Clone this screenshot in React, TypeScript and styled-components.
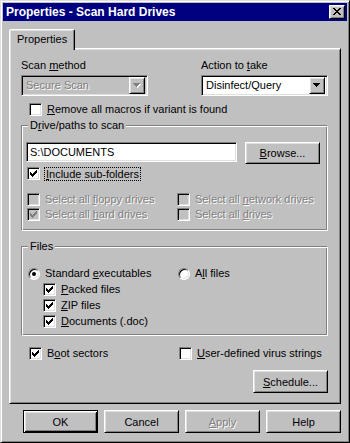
import React from 'react';
import styled, { createGlobalStyle, css } from 'styled-components';

const GlobalStyle = createGlobalStyle`
  html, body {
    margin: 0;
    padding: 0;
    background: #c0c0c0;
  }
  body {
    font-family: 'Liberation Sans', Arial, sans-serif;
    font-size: 11px;
    color: #000;
  }
  * {
    box-sizing: border-box;
  }
  u {
    text-decoration-thickness: 1px;
    text-underline-offset: 1px;
  }
`;

const raised = css`
  border: 1px solid;
  border-color: #fff #000 #000 #fff;
  box-shadow: inset 1px 1px #dfdfdf, inset -1px -1px #808080;
`;

const sunken = css`
  border: 1px solid;
  border-color: #808080 #fff #fff #808080;
  box-shadow: inset 1px 1px #000, inset -1px -1px #dfdfdf;
`;

const disabledText = css`
  color: #808080;
  text-shadow: 1px 1px 0 #fff;
`;

const Window = styled.div`
  width: 350px;
  height: 443px;
  background: #c0c0c0;
  border: 1px solid;
  border-color: #dfdfdf #000 #000 #dfdfdf;
  box-shadow: inset 1px 1px #fff, inset -1px -1px #808080;
  padding: 2px;
  display: flex;
  flex-direction: column;
`;

const TitleBar = styled.div`
  height: 18px;
  background: #000080;
  color: #fff;
  display: flex;
  align-items: center;
  justify-content: space-between;
  padding: 0 2px 0 3px;
`;

const Title = styled.span`
  font-weight: bold;
  font-size: 12px;
`;

const CloseButton = styled.div`
  ${raised};
  width: 16px;
  height: 14px;
  background: #c0c0c0;
  display: flex;
  align-items: center;
  justify-content: center;
  padding-bottom: 1px;
`;

const Body = styled.div`
  display: flex;
  flex-direction: column;
  padding: 8px 6px 0 6px;
`;

const TabStrip = styled.div`
  display: flex;
  height: 19px;
  position: relative;
  z-index: 1;
`;

const Tab = styled.div`
  height: 21px;
  padding: 0 7px 2px 7px;
  background: #c0c0c0;
  border: 1px solid;
  border-bottom: none;
  border-color: #fff #000 transparent #fff;
  border-radius: 2px 2px 0 0;
  box-shadow: inset -1px 0 #808080, inset 1px 1px #dfdfdf;
  display: flex;
  align-items: center;
`;

const Panel = styled.div`
  ${raised};
  height: 356px;
  padding: 10px 12px 0 11px;
  display: flex;
  flex-direction: column;
`;

const TopRow = styled.div`
  display: flex;
  justify-content: space-between;
`;

const Field = styled.div`
  width: 127px;
  display: flex;
  flex-direction: column;
  gap: 3px;
`;

const Label = styled.span<{ disabled?: boolean }>`
  line-height: 13px;
  height: 13px;
  white-space: nowrap;
  ${({ disabled }) => disabled && disabledText};
`;

const Combo = styled.div<{ disabled?: boolean }>`
  ${sunken};
  height: 21px;
  background: ${({ disabled }) => (disabled ? '#c0c0c0' : '#fff')};
  display: flex;
  align-items: center;
  justify-content: space-between;
  padding: 2px 2px 2px 4px;
`;

const ComboArrow = styled.div`
  ${raised};
  width: 16px;
  height: 17px;
  background: #c0c0c0;
  display: flex;
  align-items: center;
  justify-content: center;
`;

const Row = styled.div<{ indent?: number; top?: number }>`
  display: flex;
  align-items: center;
  gap: 5px;
  height: 13px;
  line-height: 13px;
  margin-left: ${({ indent }) => indent ?? 0}px;
  margin-top: ${({ top }) => top ?? 0}px;
  white-space: nowrap;
`;

const Box = styled.span<{ disabled?: boolean }>`
  ${sunken};
  width: 13px;
  height: 13px;
  flex: none;
  background: ${({ disabled }) => (disabled ? '#c0c0c0' : '#fff')};
  display: flex;
  align-items: center;
  justify-content: center;
`;

const RadioDot = styled.span`
  width: 12px;
  height: 12px;
  flex: none;
  border-radius: 50%;
  border: 1px solid;
  border-color: #808080 #fff #fff #808080;
  box-shadow: inset 1px 1px #000, inset -1px -1px #dfdfdf;
  background: #fff;
  display: flex;
  align-items: center;
  justify-content: center;
`;

const Dot = styled.span`
  width: 4px;
  height: 4px;
  border-radius: 50%;
  background: #000;
`;

const Focused = styled.span`
  outline: 1px dotted #000;
  padding: 0 1px;
  line-height: 12px;
`;

const Group = styled.div<{ h: number; top: number }>`
  position: relative;
  height: ${({ h }) => h}px;
  margin-top: ${({ top }) => top}px;
  border: 1px solid;
  border-color: #808080 #fff #fff #808080;
  box-shadow: inset 1px 1px #fff, inset -1px -1px #808080;
  display: flex;
  flex-direction: column;
`;

const Legend = styled.span`
  position: absolute;
  top: -7px;
  left: 6px;
  padding: 0 2px;
  line-height: 13px;
  background: #c0c0c0;
`;

const PathRow = styled.div`
  display: flex;
  align-items: flex-start;
  gap: 8px;
  margin: 16px 0 0 4px;
`;

const TextInput = styled.div`
  ${sunken};
  width: 211px;
  height: 20px;
  background: #fff;
  padding: 0 3px;
  line-height: 18px;
`;

const Button = styled.div<{ isDefault?: boolean; w?: number; h?: number }>`
  width: ${({ w }) => w ?? 75}px;
  height: ${({ h }) => h ?? 23}px;
  flex: none;
  background: #c0c0c0;
  display: flex;
  align-items: center;
  justify-content: center;
  ${({ isDefault }) =>
    isDefault
      ? css`
          border: 1px solid #000;
          box-shadow: inset 1px 1px #fff, inset -1px -1px #000, inset 2px 2px #dfdfdf, inset -2px -2px #808080;
        `
      : raised};
`;

const ButtonText = styled.span<{ disabled?: boolean }>`
  ${({ disabled }) => disabled && disabledText};
`;

const DriveGrid = styled.div`
  display: grid;
  grid-template-columns: 150px 1fr;
  row-gap: 2px;
  margin: 13px 0 0 5px;
`;

const FileList = styled.div`
  display: flex;
  flex-direction: column;
  gap: 3px;
  margin: 3px 0 0 6px;
`;

const TwoCol = styled.div<{ top: number; left: number }>`
  display: grid;
  grid-template-columns: 150px 1fr;
  margin-top: ${({ top }) => top}px;
  margin-left: ${({ left }) => left}px;
`;

const ScheduleRow = styled.div`
  display: flex;
  justify-content: flex-end;
  margin-top: 10px;
`;

const ButtonBar = styled.div`
  display: flex;
  justify-content: flex-end;
  gap: 6px;
  margin-top: 6px;
`;

const Arrow: React.FC<{ disabled?: boolean }> = ({ disabled }) => (
  <svg width="8" height="5" viewBox="0 0 8 5" shapeRendering="crispEdges">
    {disabled && <path d="M2 1h6v1h-1v1h-1v1h-1v1h-1v-1h-1v-1h-1z" fill="#fff" />}
    <path d="M0 0h7v1h-1v1h-1v1h-1v1h-1v-1h-1v-1h-1v-1h-1z" fill={disabled ? '#808080' : '#000'} />
  </svg>
);

const Check: React.FC<{ disabled?: boolean }> = ({ disabled }) => (
  <svg width="7" height="7" viewBox="0 0 7 7" shapeRendering="crispEdges">
    <path
      d="M6 0h1v3h-1v1h-1v1h-1v1h-1v1h-1v-1h-1v-1h-1v-3h1v1h1v1h1v-1h1v-1h1z"
      fill={disabled ? '#808080' : '#000'}
    />
  </svg>
);

const Checkbox: React.FC<{ checked?: boolean; disabled?: boolean; children: React.ReactNode; indent?: number; top?: number }> = ({
  checked,
  disabled,
  children,
  indent,
  top,
}) => (
  <Row indent={indent} top={top}>
    <Box disabled={disabled}>{checked && <Check disabled={disabled} />}</Box>
    <Label disabled={disabled}>{children}</Label>
  </Row>
);

const Radio: React.FC<{ checked?: boolean; children: React.ReactNode }> = ({ checked, children }) => (
  <Row>
    <RadioDot>{checked && <Dot />}</RadioDot>
    <Label>{children}</Label>
  </Row>
);

const App: React.FC = () => (
  <>
    <GlobalStyle />
    <Window>
      <TitleBar>
        <Title>Properties - Scan Hard Drives</Title>
        <CloseButton>
          <svg width="8" height="7" viewBox="0 0 8 7" shapeRendering="crispEdges">
            <path
              d="M0 0h2v1h1v1h2v-1h1v-1h2v1h-1v1h-1v1h-1v1h1v1h1v1h1v1h-2v-1h-1v-1h-2v1h-1v1h-2v-1h1v-1h1v-1h1v-1h-1v-1h-1v-1h-1z"
              fill="#000"
            />
          </svg>
        </CloseButton>
      </TitleBar>

      <Body>
        <TabStrip>
          <Tab>Properties</Tab>
        </TabStrip>

        <Panel>
          <TopRow>
            <Field>
              <Label>
                Scan <u>m</u>ethod
              </Label>
              <Combo disabled>
                <Label disabled>Secure Scan</Label>
                <ComboArrow>
                  <Arrow disabled />
                </ComboArrow>
              </Combo>
            </Field>
            <Field>
              <Label>
                Action to <u>t</u>ake
              </Label>
              <Combo>
                <Label>Disinfect/Query</Label>
                <ComboArrow>
                  <Arrow />
                </ComboArrow>
              </Combo>
            </Field>
          </TopRow>

          <Checkbox indent={8} top={7}>
            <u>R</u>emove all macros if variant is found
          </Checkbox>

          <Group h={106} top={9}>
            <Legend>
              D<u>r</u>ive/paths to scan
            </Legend>
            <PathRow>
              <TextInput>S:\DOCUMENTS</TextInput>
              <Button h={22}>
                <ButtonText>
                  <u>B</u>rowse...
                </ButtonText>
              </Button>
            </PathRow>
            <Row indent={5} top={3}>
              <Box>
                <Check />
              </Box>
              <Focused>
                <u>I</u>nclude sub-folders
              </Focused>
            </Row>
            <DriveGrid>
              <Checkbox disabled>
                Select all <u>f</u>loppy drives
              </Checkbox>
              <Checkbox disabled>
                Select all <u>n</u>etwork drives
              </Checkbox>
              <Checkbox disabled checked>
                Select all <u>h</u>ard drives
              </Checkbox>
              <Checkbox disabled>
                Select all <u>d</u>rives
              </Checkbox>
            </DriveGrid>
          </Group>

          <Group h={90} top={15}>
            <Legend>Files</Legend>
            <TwoCol top={20} left={6}>
              <Radio checked>
                Standard <u>e</u>xecutables
              </Radio>
              <Radio>
                A<u>l</u>l files
              </Radio>
            </TwoCol>
            <FileList>
              <Checkbox checked indent={15}>
                <u>P</u>acked files
              </Checkbox>
              <Checkbox checked indent={15}>
                <u>Z</u>IP files
              </Checkbox>
              <Checkbox checked indent={15}>
                <u>D</u>ocuments (.doc)
              </Checkbox>
            </FileList>
          </Group>

          <TwoCol top={11} left={8}>
            <Checkbox checked>
              B<u>o</u>ot sectors
            </Checkbox>
            <Checkbox>
              <u>U</u>ser-defined virus strings
            </Checkbox>
          </TwoCol>

          <ScheduleRow>
            <Button>
              <ButtonText>
                <u>S</u>chedule...
              </ButtonText>
            </Button>
          </ScheduleRow>
        </Panel>

        <ButtonBar>
          <Button isDefault>
            <ButtonText>OK</ButtonText>
          </Button>
          <Button>
            <ButtonText>Cancel</ButtonText>
          </Button>
          <Button>
            <ButtonText disabled>
              <u>A</u>pply
            </ButtonText>
          </Button>
          <Button>
            <ButtonText>Help</ButtonText>
          </Button>
        </ButtonBar>
      </Body>
    </Window>
  </>
);

export default App;
